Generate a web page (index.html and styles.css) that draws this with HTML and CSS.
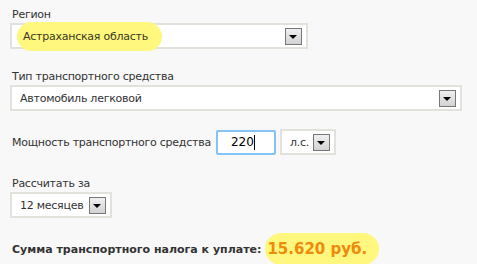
FILE: index.html
```html
<!DOCTYPE html>
<html lang="ru">
<head>
    <meta charset="UTF-8">
    <title>Калькулятор транспортного налога</title>
    <link rel="stylesheet" href="styles.css">
</head>
<body>
    <div class="calc">
        <!-- Регион -->
        <div class="field">
            <div class="label">Регион</div>
            <div class="select wide-1">
                <span class="value"><span class="marker">Астраханская область</span></span>
                <span class="arrow"></span>
            </div>
        </div>

        <!-- Тип ТС -->
        <div class="field">
            <div class="label">Тип транспортного средства</div>
            <div class="select wide-2">
                <span class="value">Автомобиль легковой</span>
                <span class="arrow"></span>
            </div>
        </div>

        <!-- Мощность -->
        <div class="field row">
            <span class="label-inline">Мощность транспортного средства</span>
            <div class="power-input">220<span class="caret"></span></div>
            <div class="select unit">
                <span class="value">л.с.</span>
                <span class="arrow"></span>
            </div>
        </div>

        <!-- Период -->
        <div class="field period-field">
            <div class="label">Рассчитать за</div>
            <div class="select period">
                <span class="value">12 месяцев</span>
                <span class="arrow"></span>
            </div>
        </div>

        <!-- Итог -->
        <div class="result">
            Сумма транспортного налога к уплате:
            <span class="amount">15.620 руб.</span>
        </div>
    </div>
</body>
</html>
```

FILE: styles.css
```css
body {
    margin: 0;
    background-color: #f8f8f8;
    font-family: "DejaVu Sans", Verdana, sans-serif;
    font-size: 11px;
    letter-spacing: -0.25px;
    color: #333333;
}

.calc {
    padding: 8px 10px;
}

.field + .field {
    margin-top: 21px;
}

.label {
    padding-left: 2px;
    line-height: 14px;
    margin-bottom: 1px;
}

/* Select boxes */
.select {
    display: flex;
    align-items: center;
    justify-content: space-between;
    box-sizing: border-box;
    height: 26px;
    background-color: #ffffff;
    border: 2px solid #e2e2dc;
    padding: 0 4px 0 8px;
    white-space: nowrap;
}

.wide-1 {
    width: 298px;
}

.wide-2 {
    width: 452px;
}

.period {
    width: 102px;
}

.unit {
    width: 56px;
    padding-left: 8px;
}

.arrow {
    position: relative;
    box-sizing: border-box;
    width: 17px;
    height: 17px;
    border: 1px solid #777777;
    background: linear-gradient(#f0f0f0, #d2d2d2);
}

.arrow::after {
    content: '';
    position: absolute;
    left: 3px;
    top: 6px;
    border-left: 4px solid transparent;
    border-right: 4px solid transparent;
    border-top: 4px solid #000000;
}

/* Yellow marker highlight */
.marker {
    background-color: #fff77e;
    border-radius: 16px;
    padding: 8px 14px 8px 6px;
    margin-left: -3px;
    color: #3a3a20;
}

/* Power row */
.field.row {
    display: flex;
    align-items: center;
    margin-top: 18px;
}

.label-inline {
    padding-left: 2px;
    margin-right: 5px;
}

.power-input {
    box-sizing: border-box;
    width: 60px;
    height: 25px;
    border: 2px solid #86c3f5;
    border-radius: 2px;
    background-color: #ffffff;
    color: #000000;
    display: flex;
    align-items: center;
    justify-content: flex-end;
    padding-right: 19px;
    margin-right: 4px;
    font-size: 12px;
    letter-spacing: 0;
}

.caret {
    width: 1px;
    height: 15px;
    background-color: #000000;
}

.field.period-field {
    margin-top: 22px;
}

/* Result */
.result {
    margin-top: 15px;
    padding-left: 2px;
    font-weight: bold;
    letter-spacing: 0;
    display: flex;
    align-items: center;
    gap: 4px;
}

.amount {
    background-color: #fff77e;
    border-radius: 16px;
    padding: 7px 12px 7px 2px;
    color: #f08a0a;
    font-size: 15px;
}
```
